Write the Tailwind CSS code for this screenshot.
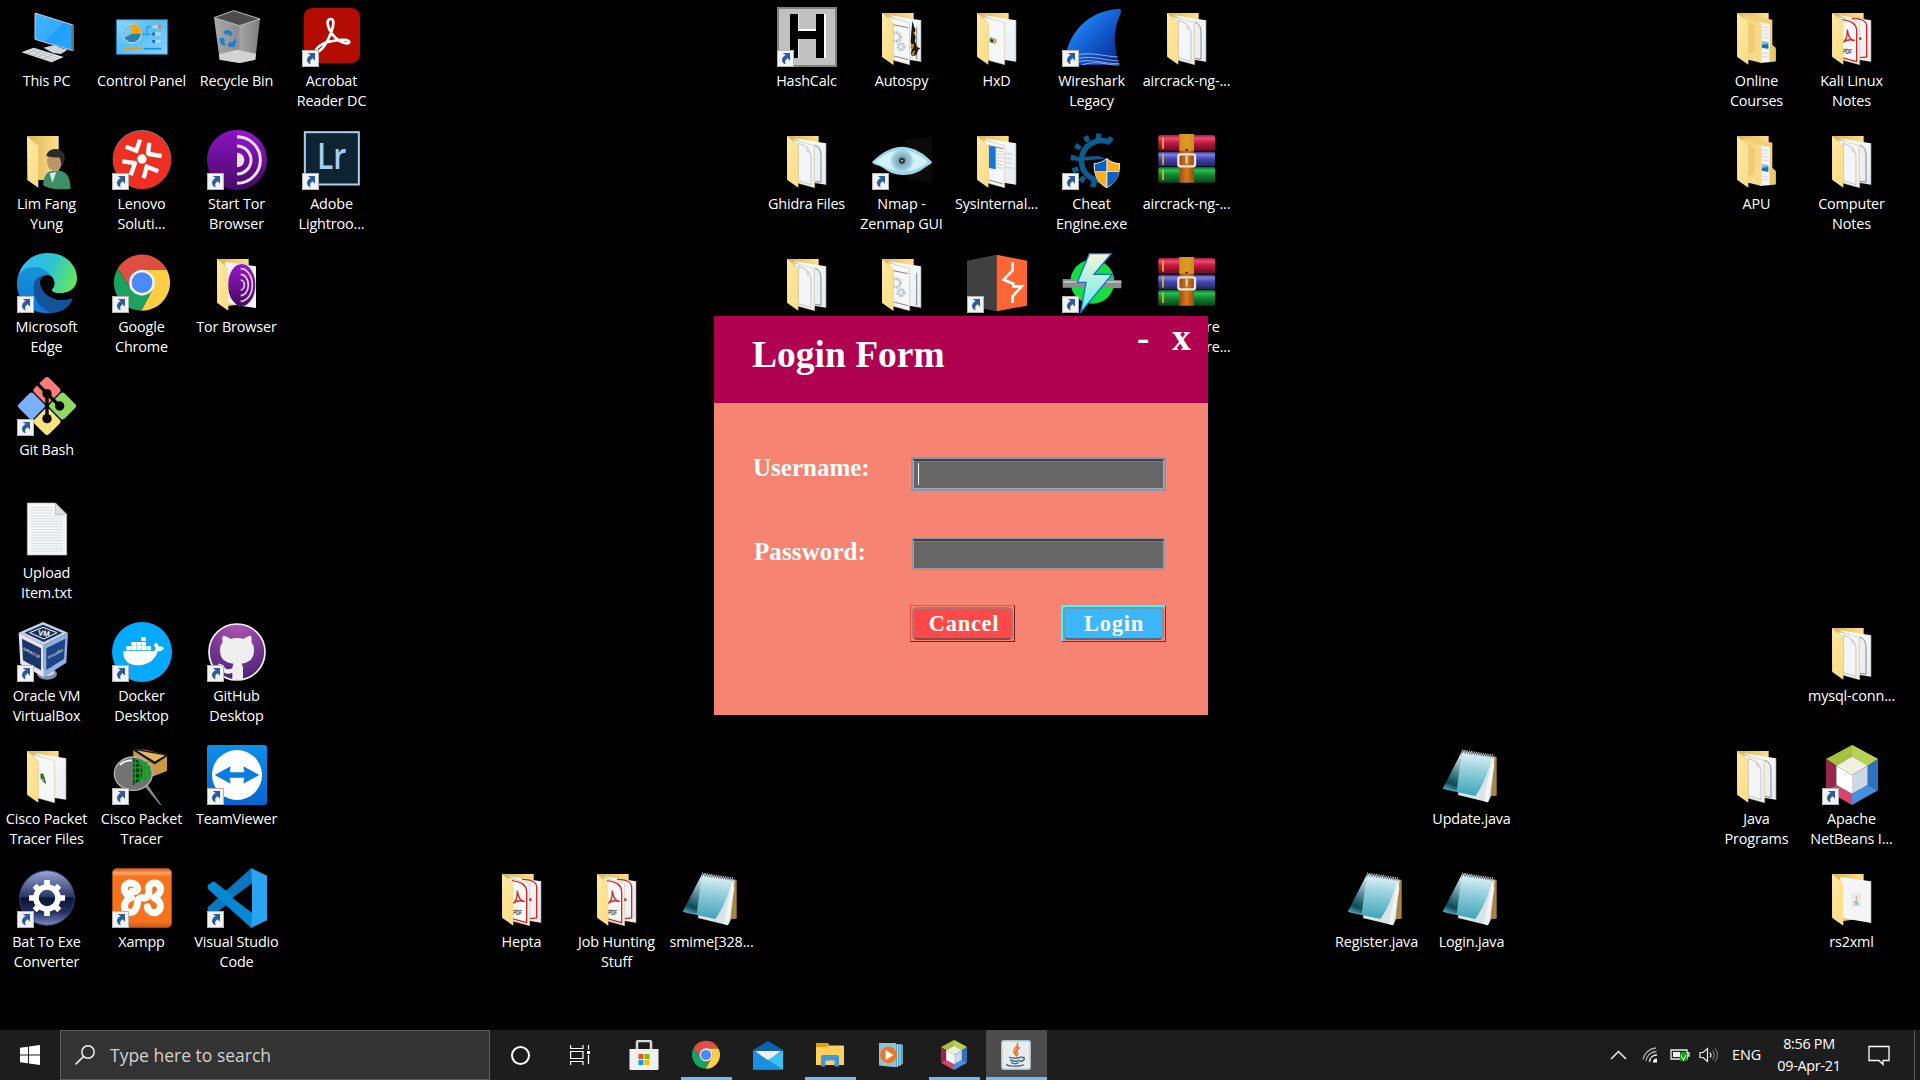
<!DOCTYPE html>
<html lang="en">
<head>
<meta charset="utf-8">
<title>Desktop</title>
<script src="https://cdn.jsdelivr.net/npm/@tailwindcss/browser@4"></script>
</head>
<body class="w-[1920px] h-[1080px] overflow-hidden bg-black font-['Open_Sans',sans-serif]">
<svg class="absolute size-0" aria-hidden="true">
<defs>
  <linearGradient id="gFlap" x1="0" y1="0" x2="1" y2="1"><stop offset="0" stop-color="#ffe9a6"/><stop offset="1" stop-color="#fcdc83"/></linearGradient>
  <linearGradient id="gBack" x1="0" y1="0" x2="1" y2="0"><stop offset="0" stop-color="#d9b357"/><stop offset="1" stop-color="#ffe08a"/></linearGradient>
  <linearGradient id="gPaper" x1="0" y1="0" x2="1" y2="1"><stop offset="0" stop-color="#ffffff"/><stop offset="1" stop-color="#e9ebee"/></linearGradient>
  <linearGradient id="gTor" x1="0" y1="0" x2="0" y2="1"><stop offset="0" stop-color="#9a17cf"/><stop offset="1" stop-color="#410a5c"/></linearGradient>
  <linearGradient id="gScreen" x1="0" y1="0" x2="1" y2="1"><stop offset="0" stop-color="#45b4ff"/><stop offset=".5" stop-color="#35aaff"/><stop offset=".52" stop-color="#1f9dff"/><stop offset="1" stop-color="#2ea8ff"/></linearGradient>
  <linearGradient id="gEdgeTop" x1="0" y1=".3" x2="1" y2=".6"><stop offset="0" stop-color="#35b9f5"/><stop offset=".5" stop-color="#2cc3d6"/><stop offset="1" stop-color="#62e858"/></linearGradient>
  <linearGradient id="gEdgeL" x1="0" y1="0" x2="0" y2="1"><stop offset="0" stop-color="#1795d8"/><stop offset="1" stop-color="#0a78d8"/></linearGradient>
  <linearGradient id="gTV" x1="0" y1="0" x2="0" y2="1"><stop offset="0" stop-color="#0e8ee9"/><stop offset="1" stop-color="#0665cf"/></linearGradient>
  <linearGradient id="gGear" x1="0" y1="0" x2="0" y2="1"><stop offset="0" stop-color="#9aa5d8"/><stop offset=".48" stop-color="#2a3563"/><stop offset=".5" stop-color="#0a1233"/><stop offset=".75" stop-color="#232e5e"/><stop offset="1" stop-color="#7c88c0"/></linearGradient>
  <linearGradient id="gXampp" x1="0" y1="0" x2="0" y2="1"><stop offset="0" stop-color="#c05a20"/><stop offset=".08" stop-color="#ffa468"/><stop offset=".14" stop-color="#f5731d"/><stop offset=".9" stop-color="#f5731d"/><stop offset="1" stop-color="#c9561a"/></linearGradient>
  <linearGradient id="gShark" x1="0" y1="0" x2="1" y2="1"><stop offset="0" stop-color="#5aa6ff"/><stop offset=".35" stop-color="#1a74e8"/><stop offset="1" stop-color="#02228a"/></linearGradient>
  <linearGradient id="gNote" x1=".5" y1="0" x2=".4" y2="1"><stop offset="0" stop-color="#e4f4f8"/><stop offset=".45" stop-color="#8fccd9"/><stop offset="1" stop-color="#3ba3b8"/></linearGradient>
  <linearGradient id="gNoteDark" x1=".5" y1="0" x2=".3" y2="1"><stop offset="0" stop-color="#d7e9ee"/><stop offset=".55" stop-color="#3c7886"/><stop offset=".8" stop-color="#0e4756"/><stop offset="1" stop-color="#57a9b9"/></linearGradient>
  <linearGradient id="gRed" x1="0" y1="0" x2="0" y2="1"><stop offset="0" stop-color="#a3183a"/><stop offset=".2" stop-color="#ee4a72"/><stop offset=".5" stop-color="#c01a3e"/><stop offset="1" stop-color="#6c0a22"/></linearGradient>
  <linearGradient id="gBlu" x1="0" y1="0" x2="0" y2="1"><stop offset="0" stop-color="#2d2f80"/><stop offset=".2" stop-color="#807ee2"/><stop offset=".5" stop-color="#4345ac"/><stop offset="1" stop-color="#22235f"/></linearGradient>
  <linearGradient id="gGrn" x1="0" y1="0" x2="0" y2="1"><stop offset="0" stop-color="#0e5f22"/><stop offset=".2" stop-color="#2ac050"/><stop offset=".5" stop-color="#148835"/><stop offset="1" stop-color="#074416"/></linearGradient>
  <linearGradient id="gBelt" x1="0" y1="0" x2="1" y2="0"><stop offset="0" stop-color="#9c4c0c"/><stop offset=".5" stop-color="#d9791c"/><stop offset="1" stop-color="#9c4c0c"/></linearGradient>
  <linearGradient id="gBolt" x1="0" y1="0" x2="0" y2="1"><stop offset="0" stop-color="#f2f5d8"/><stop offset="1" stop-color="#62ecf0"/></linearGradient>
  <linearGradient id="gBin" x1="0" y1="0" x2="1" y2="0"><stop offset="0" stop-color="#a9a9a9"/><stop offset=".54" stop-color="#8d8d8d"/><stop offset=".56" stop-color="#a4a4a4"/><stop offset="1" stop-color="#7e7e7e"/></linearGradient>
  <linearGradient id="gCP" x1="0" y1="0" x2="1" y2="1"><stop offset="0" stop-color="#8fd6ff"/><stop offset=".45" stop-color="#56bdf8"/><stop offset="1" stop-color="#8ad6ff"/></linearGradient>
  <radialGradient id="gCat" cx=".5" cy="0" r="1"><stop offset="0" stop-color="#b055b5"/><stop offset="1" stop-color="#4b2276"/></radialGradient>
  <radialGradient id="gEye"><stop offset="0" stop-color="#3c5560"/><stop offset=".3" stop-color="#7ea3b3"/><stop offset="1" stop-color="#a9dcec"/></radialGradient>

  <symbol id="shortcut" viewBox="0 0 180 180"><rect x="1.500" y="130.500" width="48" height="48" fill="#f3f3f3" stroke="#b5b5b5" stroke-width="3"/><path d="M17 138h22v23l-7-7c-8 5-9 10-6 18-13-4-16-20 0-28z" fill="#2b5c9e"/></symbol>

  <symbol id="fback" viewBox="0 0 180 180"><path d="M30 18H125V150L60 160 30 148Z" fill="url(#gBack)"/></symbol>
  <symbol id="fflap" viewBox="0 0 180 180"><path d="M30 19L62 46C64 50 64 54 64 60V173L31 150Z" fill="url(#gFlap)"/></symbol>
  <symbol id="fpapers" viewBox="0 0 180 180"><path d="M52 25L147 40V164L110 158V55Z" fill="url(#gPaper)"/><path d="M147 40V164" stroke="#9b9b9b" stroke-width="2"/><path d="M46 28L113 47V173L64 160V50Z" fill="#f6f7f8" stroke="#c7b98a" stroke-width="1.500"/></symbol>

  <symbol id="folder-docs" viewBox="0 0 180 180"><use href="#fback"/><use href="#fpapers"/><path d="M64 40C85 46 99 56 102 76V164L64 152Z" fill="#f4f5f7" stroke="#8f8f8f" stroke-width="1.500"/><path d="M84 46c10 5 15 12 17 24l-12-4z" fill="#dadada"/><path d="M114 46C126 50 130 58 132 72V157L114 154" fill="#eceef0" stroke="#555" stroke-width="2"/><path d="M110 50V170" stroke="#e8d9a8" stroke-width="2"/><use href="#fflap"/></symbol>
  <symbol id="folder-plain" viewBox="0 0 180 180"><use href="#fback"/><use href="#fpapers"/><use href="#fflap"/></symbol>
  <symbol id="folder-hxd" viewBox="0 0 180 180"><use href="#folder-plain"/><rect x="68" y="92" width="9" height="14" fill="#2f9a5a"/><circle cx="81" cy="102" r="8" fill="#d79a68"/><rect x="72" y="98" width="6" height="8" fill="#333"/></symbol>
  <symbol id="folder-cisco" viewBox="0 0 180 180"><use href="#folder-plain"/><path d="M70 87l8-2 6 16 3 16-7-5-9-12z" fill="#2f6d2a"/><path d="M74 98l8 6-3 5z" fill="#e0b84a"/></symbol>
  <symbol id="folder-gear" viewBox="0 0 180 180"><use href="#folder-plain"/><path d="M64 53L108 62M66 147L108 158M134 60V158" stroke="#4a4a4a" stroke-width="2"/><g fill="none" stroke="#b8c1c9" stroke-width="9" stroke-dasharray="5 2.500"><circle cx="72" cy="90" r="13"/><circle cx="87" cy="119" r="9"/></g><use href="#fflap"/></symbol>
  <symbol id="folder-autopsy" viewBox="0 0 180 180"><use href="#folder-gear"/><path d="M121 42l6 18 4 10-4 8 4 12-2 12 6 18 10 4-6 4-6 16-12 4-4-8 3-20-4-16 2-30z" fill="#1a1715"/><path d="M124 74l6 2-4 8zM117 110l10 2-4 14-8-2zM122 134l8-4-4 14-8 4z" fill="#c98427"/></symbol>
  <symbol id="folder-sys" viewBox="0 0 180 180"><use href="#fback"/><use href="#fpapers"/><path d="M64 46L108 56" stroke="#444" stroke-width="2"/><path d="M66 48L86 52V118L66 114Z" fill="#1177d8"/><path d="M88 62l20 3M88 72l20 3M88 82l20 3M88 92l20 3M88 102l20 3M88 112l20 3M116 70l20 3M116 84l20 3M116 98l20 3M116 112l20 3" stroke="#c3c7cc" stroke-width="4" stroke-dasharray="4 2"/><path d="M66 150L108 162" stroke="#555" stroke-width="2"/><use href="#fflap"/></symbol>
  <symbol id="folder-pdf" viewBox="0 0 180 180"><use href="#fback"/><use href="#fpapers"/><path d="M90 34C120 34 134 44 134 58V150L114 152" fill="none" stroke="#e3221b" stroke-width="4"/><path d="M60 38C88 42 104 50 104 72V164L60 152" fill="#f8f8f8" stroke="#e3221b" stroke-width="4"/><path d="M60 108C70 104 76 88 76 68C78 90 88 102 98 100C84 96 72 98 60 108" fill="none" stroke="#d7261e" stroke-width="4"/><circle cx="115" cy="95" r="4" fill="#d7261e"/><text x="62" y="140" font-family="Liberation Sans" font-weight="700" font-size="22" textLength="28" lengthAdjust="spacingAndGlyphs" fill="#4a4242" transform="rotate(4 62 140)">PDF</text><use href="#fflap"/></symbol>
  <symbol id="folder-nested" viewBox="0 0 180 180"><use href="#fback"/><path d="M48 22L136 38V115L146 125V163L100 168Z" fill="#f2d078"/><path d="M90 44L128 51V166L98 166Z" fill="#f2f4f7"/><path d="M106 60l18 2M106 70l18 2M106 80l18 2M106 90l18 2M106 138l18 2M106 148l18 2" stroke="#c8ccd2" stroke-width="2"/><path d="M104 102l20 3v20l-20-3z" fill="#7fbde6"/><path d="M104 114l20-4v15l-20-3z" fill="#1f6fa8"/><path d="M128 118L136 114L146 122V163L128 165Z" fill="#e9c56c"/><path d="M44 28L104 50V168L64 158V60Z" fill="#f7d987"/><path d="M62 40L84 60V130L64 140Z" fill="#eecb74"/><use href="#fflap"/></symbol>
  <symbol id="folder-tor" viewBox="0 0 180 180"><use href="#fback"/><path d="M55 27L147 40V165L100 158 60 150Z" fill="#f3f3f3"/><ellipse cx="104" cy="96" rx="41" ry="63" fill="url(#gTor)"/><g fill="none" stroke="#e5d3f2" stroke-width="5"><path d="M101 47a35 49 0 0 1 0 98"/><path d="M101 64a23 32 0 0 1 0 64"/><path d="M101 81a11 15 0 0 1 0 30"/></g><use href="#fflap"/></symbol>
  <symbol id="folder-jar" viewBox="0 0 180 180"><use href="#fback"/><path d="M55 27L147 40V165L62 150Z" fill="#f5f5f5"/><path d="M147 40V165" stroke="#aaa" stroke-width="2"/><rect x="92" y="80" width="22" height="34" fill="#eceff2" stroke="#c7ced6" stroke-width="1.500"/><path d="M104 84c-6 6 4 8-2 14" stroke="#e8893b" stroke-width="3" fill="none"/><path d="M96 102h12M98 108h12" stroke="#5d83a6" stroke-width="3"/><use href="#fflap"/></symbol>
  <symbol id="folder-user" viewBox="0 0 180 180"><path d="M30 18H125V150H64Z" fill="url(#gBack)"/><use href="#fflap"/><path d="M78 165C80 130 95 122 112 122C140 118 160 130 161 176C130 180 95 178 78 165Z" fill="#3d8f68"/><path d="M98 130l8 28 12-32z" fill="#d8e8f0"/><ellipse cx="113" cy="94" rx="23" ry="29" fill="#c0946a"/><path d="M88 78C92 50 140 50 143 80C144 95 138 106 133 110C133 95 130 88 126 82C112 84 98 80 88 78Z" fill="#2d2b2a"/></symbol>

  <symbol id="thispc" viewBox="0 0 180 180"><path d="M54 18L168 54V131L54 97Z" fill="url(#gScreen)" stroke="#c9cdd0" stroke-width="3"/><path d="M168 54V131L163 129V55Z" fill="#6d7478"/><path d="M79 122L112 114 130 122 152 128 132 141 108 138Z" fill="#cfd6da"/><path d="M13 136L50 122 140 150 104 166Z" fill="#e3e5e6"/><path d="M24 136l88 26M34 131l88 27M43 127l88 27M30 141l30-16M46 146l32-16M62 150l32-16M78 156l34-16" stroke="#9a9fa2" stroke-width="1.500"/></symbol>
  <symbol id="cpanel" viewBox="0 0 180 180"><rect x="13" y="38" width="154" height="104" fill="url(#gCP)" stroke="#1f6f99" stroke-width="3"/><circle cx="60" cy="80" r="28" fill="#2d7fae" stroke="#9fdcff" stroke-width="4"/><path d="M60 80V54a26 26 0 0 0-22 38z" fill="#7fc5ec"/><path d="M60 80V51a29 29 0 0 1 29 29z" fill="#f9a602"/><path d="M90 82h15V59h12M105 82h12" stroke="#2377b0" stroke-width="2" fill="none"/><g fill="#a5dffb" stroke="#6ab5df" stroke-width="2"><rect x="119" y="53" width="30" height="12" rx="6"/><rect x="119" y="75" width="30" height="12" rx="6"/><rect x="119" y="97" width="30" height="12" rx="6"/></g><circle cx="143" cy="59" r="5.500" fill="#f77a1e"/><circle cx="125" cy="81" r="5" fill="#216a9a"/><circle cx="125" cy="103" r="5" fill="#216a9a"/><path d="M35 125H88" stroke="#f99a06" stroke-width="5"/><path d="M95 125H148" stroke="#1b8be0" stroke-width="5"/></symbol>
  <symbol id="bin" viewBox="0 0 180 180"><path d="M21 32L80 11 159 36 145 158 98 168 38 158Z" fill="url(#gBin)"/><path d="M21 32L80 11 159 36 97 56Z" fill="#4c4c4c" stroke="#b9b9b9" stroke-width="3"/><path d="M36 142L90 128 147 140 145 158 98 168 38 158Z" fill="#d3d3d3"/><g fill="#1a7fd6"><path d="M47 74l14-6 10 3 6 10-8 8-6-10-6 6z"/><path d="M36 94l14-2 4 10-4 6 8 4-6 4-10-4z"/><path d="M62 113l8-10 2 4 8-4 2-12 6 12-6 18-14-2v5z"/></g></symbol>
  <symbol id="acrobat" viewBox="0 0 180 180"><rect x="5" y="3" width="169" height="165" rx="26" fill="#b30b00"/><path d="M85 72C73 50 75 36 86 36C97 36 96 52 89 72C78 104 60 131 47 134C34 134 46 110 92 102C120 97 143 97 142 106C138 115 104 106 85 72Z" fill="none" stroke="#fff" stroke-width="8"/></symbol>
  <symbol id="lenovo" viewBox="0 0 180 180"><circle cx="90" cy="88" r="88" fill="#777"/><circle cx="90" cy="90" r="87" fill="#ee3024"/><path d="M41 50L73 62L84 29M112 38L108 72L149 78M31 94L69 99L56 136M139 124L104 110L95 145" fill="none" stroke="#fff" stroke-width="13"/><circle cx="90" cy="87" r="19" fill="#ee3024"/><circle cx="90" cy="87" r="14" fill="#fff"/></symbol>
  <symbol id="tor" viewBox="0 0 180 180"><circle cx="90" cy="90" r="90" fill="url(#gTor)"/><path d="M90 0a90 90 0 0 0 0 180z" fill="#5a0a8f" opacity=".25"/><path d="M90 68a22 22 0 0 1 0 44z" fill="#eedff8"/><path d="M90 48a42 42 0 0 1 0 84M90 20a70 70 0 0 1 0 140" fill="none" stroke="#eedff8" stroke-width="9"/></symbol>
  <symbol id="lightroom" viewBox="0 0 180 180"><rect x="8.500" y="6.500" width="162" height="157" fill="#0d2432" stroke="#aacfee" stroke-width="6"/><text x="45" y="116" font-family="Open Sans" font-weight="600" font-size="106" textLength="88" lengthAdjust="spacingAndGlyphs" fill="#a9cdec">Lr</text></symbol>
  <symbol id="edge" viewBox="0 0 180 180"><path d="M0 92C0 40 40 25 90 42C118 55 115 85 108 95C70 105 60 140 110 178C50 190 0 150 0 92Z" fill="url(#gEdgeL)"/><path d="M3 72C14 26 50 0 92 0C150 0 180 40 180 76C180 106 155 121 131 121C112 121 103 116 104 110C112 104 113 97 112 88C106 62 78 42 52 42C28 42 10 54 3 72Z" fill="url(#gEdgeTop)"/><path d="M54 84C42 112 55 165 105 180C138 178 158 160 167 139C165 135 160 136 155 138C120 150 76 128 69 94C67 84 70 72 80 68C68 68 58 76 54 84Z" fill="#12539c"/><path d="M69 94C67 78 76 66 91 66C104 67 112 76 112 90C112 98 104 104 104 110C106 119 118 121 131 121C150 121 172 110 178 94L178 136L167 136C165 134 160 136 155 138C120 150 76 128 69 94Z" fill="#000"/></symbol>
  <symbol id="chrome" viewBox="0 0 180 180"><path d="M90 51H165A84 84 0 0 0 17 47L57 108A38 38 0 0 1 90 51Z" fill="#de4f42"/><path d="M17 47A84 84 0 0 0 88 173L123 108A38 38 0 0 1 57 108Z" fill="#1aa260"/><path d="M165 51A84 84 0 0 1 88 173L123 108A38 38 0 0 0 90 51Z" fill="#ffce45"/><circle cx="90" cy="89" r="39" fill="#f4f4f4"/><circle cx="90" cy="89" r="31" fill="#4b8bf5"/></symbol>
  <symbol id="gitbash" viewBox="0 0 180 180"><g transform="rotate(45 90 90)"><rect x="26" y="26" width="62" height="62" rx="9" fill="#ff7b7b"/><rect x="92" y="26" width="62" height="62" rx="9" fill="#8fd863"/><rect x="92" y="92" width="62" height="62" rx="9" fill="#ffe37d"/><rect x="26" y="92" width="62" height="62" rx="9" fill="#7bb0ff"/></g><path d="M58 20L90 53V128M90 53L128 90" fill="none" stroke="#000" stroke-width="10"/><g fill="#000"><circle cx="90" cy="53" r="14"/><circle cx="128" cy="90" r="14"/><circle cx="90" cy="128" r="14"/></g></symbol>
  <symbol id="txt" viewBox="0 0 180 180"><path d="M31 12H115L149 46V168H31Z" fill="#f7f7f7" stroke="#bbb" stroke-width="2"/><path d="M115 12L149 46H115Z" fill="#dedede" stroke="#a9a9a9" stroke-width="2"/><path d="M42 26H108M42 34H108M42 42H108M42 51H138M42 59H138M42 67H138M42 75H138M42 83H138M42 92H138M42 100H138M42 108H138M42 116H138M42 124H138M42 133H138M42 141H138M42 149H138M42 156H138" stroke="#d3d6d8" stroke-width="2.500"/></symbol>
  <symbol id="vbox" viewBox="0 0 180 180"><ellipse cx="90" cy="156" rx="30" ry="17" fill="#7e8fb5"/><ellipse cx="90" cy="152" rx="22" ry="10" fill="#c9d3e8"/><path d="M78 0L153 32 80 70 5 32Z" fill="#c4d4ea"/><path d="M78 8L136 32 80 60 22 32Z" fill="#17305c"/><path d="M78 16L120 32 80 51 38 32Z" fill="none" stroke="#fff" stroke-width="3"/><path d="M5 32L80 70V166L10 126Z" fill="#e6e2ee"/><path d="M15 50L72 79V145L18 115Z" fill="#1b3566"/><path d="M153 32L80 70V166L148 122Z" fill="#8fb0e0"/><path d="M145 50L88 79V144L141 111Z" fill="#1d4485"/><text x="64" y="41" font-family="Open Sans" font-weight="700" font-size="22" fill="#fff" transform="rotate(8 75 35)">VM</text><text transform="translate(19 84) skewY(27)" font-family="Open Sans" font-weight="700" font-size="13" fill="#c3cfe2" textLength="50" lengthAdjust="spacingAndGlyphs">ORACLE</text><text transform="translate(92 112) skewY(-28)" font-family="Open Sans" font-weight="700" font-size="13" fill="#c3cfe2" textLength="46" lengthAdjust="spacingAndGlyphs">VirtualBox</text></symbol>
  <symbol id="docker" viewBox="0 0 180 180"><circle cx="90" cy="90" r="90" fill="#04aaff"/><path d="M34 87H124C130 86 133 80 128 74C122 66 130 63 134 63C139 67 140 73 140 74C148 72 154 74 156 78C152 86 146 88 137 88C130 112 112 129 78 130C48 130 32 114 34 87Z" fill="#fff"/><g fill="#fff"><path d="M43 72h14v13H43zM58 72h14v13H58zM73 72h14v13H73zM88 72h14v13H88zM103 72h14v13h-14zM58 60h14v11H58zM73 60h14v11H73zM88 60h14v11H88zM88 45h14v12H88z"/></g></symbol>
  <symbol id="github" viewBox="0 0 180 180"><circle cx="90" cy="90" r="84" fill="url(#gCat)" stroke="#f5f5f5" stroke-width="5"/><path d="M76 172V152C66 157 52 158 46 144C42 134 38 132 33 126C44 122 50 132 54 138C60 144 70 142 76 138C77 132 78 128 80 125C55 122 39 112 39 84C39 74 42 67 47 61C45 54 46 47 48 41C56 41 64 46 70 51C82 47 98 47 110 51C116 46 124 41 132 41C134 47 135 54 133 61C138 67 141 74 141 84C141 112 125 122 103 125C107 129 108 134 108 140V172Z" fill="#efefef"/></symbol>
  <symbol id="ptracer" viewBox="0 0 180 180"><path d="M64 12L100 14 165 30V78L124 94 64 70Z" fill="#c99a43"/><path d="M64 12L128 54 165 30" fill="none" stroke="#151105" stroke-width="7"/><path d="M64 12L165 30 128 52Z" fill="#e1b865" stroke="#1e1607" stroke-width="4"/><path d="M95 120L144 180 148 180 105 116Z" fill="#8b8b8b"/><ellipse cx="64" cy="86" rx="57" ry="50" fill="#737373" stroke="#b3b3b3" stroke-width="4"/><path d="M64 38A54 47 0 0 1 64 120Z" fill="#062206"/><path d="M70 40V118M84 44V114M98 50V106M110 60V96M62 54H108M62 68H116M62 84H118M62 100H110" stroke="#00a815" stroke-width="5"/><path d="M24 60Q36 46 60 46" fill="none" stroke="#fff" stroke-width="5"/></symbol>
  <symbol id="teamviewer" viewBox="0 0 180 180"><rect width="180" height="180" rx="8" fill="url(#gTV)"/><circle cx="90" cy="90" r="75" fill="#fff"/><path d="M23 90L71 64L68 82H112L109 64L157 90L109 116L112 98H68L71 116Z" fill="#0a7be0"/></symbol>
  <symbol id="batexe" viewBox="0 0 180 180"><circle cx="90" cy="90" r="82" fill="url(#gGear)" stroke="#3a4474" stroke-width="3"/><circle cx="90" cy="90" r="33" fill="none" stroke="#fff" stroke-width="17"/><g stroke="#fff" stroke-width="17"><path d="M90 54V36M90 126V144M54 90H36M126 90H144M65 65L53 53M115 115L127 127M65 115L53 127M115 65L127 53"/></g></symbol>
  <symbol id="xampp" viewBox="0 0 180 180"><rect x="1" y="1" width="178" height="178" rx="14" fill="url(#gXampp)" stroke="#a9480f" stroke-width="2"/><path d="M58 89C40 80 32 64 40 52C50 40 72 44 76 58C80 66 72 72 60 70M58 89C40 94 30 118 44 130C62 140 74 126 76 106C78 90 84 88 96 90C110 92 112 74 110 60C112 44 134 40 142 52C152 66 142 80 126 89C146 98 150 116 140 128C128 140 108 132 106 116" fill="none" stroke="#fff" stroke-width="21" stroke-linecap="round" stroke-linejoin="round"/></symbol>
  <symbol id="vscode" viewBox="0 0 180 180"><path d="M132 0L180 23V157L132 180Z" fill="#27a5f2"/><path d="M133 0L2 118V128L16 138C20 140 24 138 26 136L135 52Z" fill="#0a76bb"/><path d="M133 180L2 62V52L16 42C20 40 24 42 26 44L135 128Z" fill="#0389d4"/><path d="M135 46V134L76 90Z" fill="#000"/></symbol>
  <symbol id="hashcalc" viewBox="0 0 180 180"><rect x="3" y="3" width="174" height="174" fill="#c1c1c1" stroke="#828282" stroke-width="6"/><path d="M39 21H65V66H121V21H147V153H121V95H65V153H39Z" fill="#fff"/><path d="M39 21H63V72H117V21H141V153H117V96H63V153H39Z" fill="#000"/></symbol>
  <symbol id="wireshark" viewBox="0 0 180 180"><path d="M10 150C24 66 90 8 175 5C179 12 176 18 174 24C150 76 156 130 172 174H40Z" fill="url(#gShark)"/><path d="M30 148C80 130 120 148 168 150M30 160C80 140 120 160 170 162M40 168C80 150 130 172 172 170M60 174C100 158 140 176 172 174" fill="none" stroke="#cfe2ff" stroke-width="2"/></symbol>
  <symbol id="nmap" viewBox="0 0 180 180"><path d="M100 30L180 20V158L110 150Z" fill="#0a0a0a"/><path d="M0 96C30 66 60 50 92 50C124 52 158 70 180 96C180 102 170 104 160 112C140 128 120 135 96 135C70 136 50 126 34 114C20 104 4 106 0 96Z" fill="#9fd6e6"/><path d="M8 96C40 70 60 60 90 60C120 60 146 76 168 96C140 118 120 124 90 124C60 124 40 112 8 96Z" fill="#d4f0f8"/><circle cx="90" cy="92" r="33" fill="url(#gEye)"/><circle cx="90" cy="92" r="9" fill="#28343a"/><circle cx="90" cy="92" r="3" fill="#b6c4c9"/></symbol>
  <symbol id="cheat" viewBox="0 0 180 180"><g fill="none" stroke="#0b5d8f"><path d="M144 38A60 60 0 1 0 140 148" stroke-width="16"/><path d="M150 34A72 72 0 1 0 148 150" stroke-width="18" stroke-dasharray="15 21"/></g><path d="M40 82L110 78 130 86 44 94Z" fill="#0b5d8f"/><path d="M95 100C110 98 122 94 134 84C146 94 158 98 174 100C176 140 160 160 134 175C108 160 94 140 95 100Z" fill="#eee"/><path d="M98 103C110 101 122 97 133 88V124H99ZM136 126H171C168 146 158 160 136 171Z" fill="#0b62c4"/><path d="M136 88C148 98 158 101 171 103L171 124H136ZM99 126H133V171C112 160 102 146 99 126Z" fill="#ffb022"/></symbol>
  <symbol id="winrar" viewBox="0 0 180 180"><rect x="4" y="15" width="170" height="47" rx="5" fill="url(#gRed)"/><rect x="4" y="65" width="170" height="44" rx="5" fill="url(#gBlu)"/><rect x="4" y="111" width="170" height="47" rx="5" fill="url(#gGrn)"/><rect x="15.500" y="22" width="5" height="34" fill="#e5b52a"/><rect x="15.500" y="70" width="5" height="34" fill="#e5b52a"/><rect x="15.500" y="118" width="5" height="32" fill="#e5b52a"/><rect x="67" y="12" width="44" height="146" fill="url(#gBelt)"/><rect x="67" y="12" width="44" height="50" fill="#e0a526" opacity=".75"/><rect x="64" y="73" width="50" height="36" rx="6" fill="none" stroke="#e6e6e6" stroke-width="7"/><path d="M89 78V100" stroke="#d5d5d5" stroke-width="6"/><circle cx="89" cy="60" r="4" fill="#4b2506"/></symbol>
  <symbol id="burp" viewBox="0 0 180 180"><path d="M0 23L89 5V175L0 158Z" fill="#404040"/><path d="M89 5L180 23V158L89 175Z" fill="#ff6633"/><path d="M137 28V52L110 80L139 92V100H164L137 130V150" fill="none" stroke="#fff" stroke-width="8"/></symbol>
  <symbol id="zap" viewBox="0 0 180 180"><circle cx="91" cy="86" r="66" fill="#12e03c"/><path d="M2 78L90 80 178 82V106L90 104 2 104Z" fill="#8e8e8e"/><path d="M4 84H178V89H4Z" fill="#c2c2c2"/><path d="M82 2H148L96 64H150L56 178L72 88H46Z" fill="url(#gBolt)" stroke="#176dd8" stroke-width="4"/></symbol>
  <symbol id="notepad" viewBox="0 0 180 180"><path d="M156 34L164 36V152L146 154Z" fill="#a8843e"/><path d="M64 18L158 36L146 156L138 172L48 150Z" fill="#d9e3e8"/><path d="M150 40L126 168L138 172L157 60Z" fill="#f2f5f6"/><path d="M60 18L150 34C140 80 122 124 100 153L6 133L40 130Z" fill="url(#gNote)"/><path d="M60 18L44 138L2 131Z" fill="url(#gNoteDark)"/><path d="M60 20L154 34" stroke="#747d80" stroke-width="9" stroke-dasharray="4 3"/><path d="M60 15L154 30" stroke="#e3e6e7" stroke-width="3" stroke-dasharray="3 4"/></symbol>
  <symbol id="netbeans" viewBox="0 0 180 180"><path d="M90 0L168 42 137 62 90 34 43 62 12 42Z" fill="#a6c13d"/><path d="M90 0L168 42 137 62 90 34Z" fill="#b6d153"/><path d="M12 42L43 62V120L12 136Z" fill="#93284c"/><path d="M12 136L43 120 90 146V180Z" fill="#d9446a"/><path d="M168 42L137 62V120L168 136Z" fill="#2f70bf"/><path d="M168 136L137 120 90 146V180Z" fill="#4590e0"/><path d="M90 34L137 62 90 90 43 62Z" fill="#eff2df"/><path d="M43 62L90 90V146L43 120Z" fill="#fff"/><path d="M137 62L90 90V146L137 120Z" fill="#cdd8e3"/></symbol>
</defs>
</svg>

<main id="desktop" class="grid h-[1030px] grid-cols-[repeat(20,94px)] grid-rows-[repeat(8,123px)] gap-x-px"></main>

<section class="absolute left-[714px] top-[316px] flex h-[399px] w-[494px] flex-col bg-[#f78472] font-['Liberation_Serif',serif] font-bold text-white">
  <header class="flex h-[87px] bg-[#b0004f] text-[37.5px] leading-[42px]">
    <h1 class="w-[385px] pl-[38px] pt-[18px]">Login Form</h1>
    <div class="w-[36px] pl-[38px] pt-px">-</div>
    <div class="pl-[35px] pt-px">x</div>
  </header>
  <form class="grid grid-cols-[158px_256px] grid-rows-[81px_67px_38px] pl-[39px] pt-[54px] text-[25px] leading-7">
    <label class="-mt-[3px]">Username:</label>
    <div class="h-[34px] w-[255px] border-2 border-[#8298b8]">
      <div class="h-full border border-t-2 border-[#a9a9a9] border-t-[#424242] bg-[#666] pl-1 pt-[2px] shadow-[inset_0_1px_#787878]"><div class="h-[22px] w-px bg-white"></div></div>
    </div>
    <label class="pl-px tracking-[0.100px]">Password:</label>
    <div class="ml-px h-8 w-[253px] border border-[#999093]">
      <div class="h-full border border-t-2 border-[#9c9c9c] border-t-[#424242] bg-[#666] shadow-[inset_0_1px_#787878]"></div>
    </div>
    <div class="col-start-2 -ml-px flex w-[256px] justify-between text-[22.500px] leading-[29px] tracking-[0.700px]">
      <div class="h-[37px] w-[105px] border border-[#ff4a4a] border-b-[#7a1a1a] border-r-[#7a1a1a] p-px"><div class="h-full rounded-[5px] border-2 border-[#a77] border-b-[#8b4a4a] bg-[#ff4848] pl-[3px] text-center">Cancel</div></div>
      <div class="h-[37px] w-[105px] border border-[#3ff] border-b-[#1c4f7a] border-r-[#1c4f7a] p-px shadow-[inset_1px_1px_#3ff]"><div class="h-full rounded-[5px] border-2 border-[#7298ac] border-b-[#3f7190] bg-[#3bb6ff] pl-px text-center">Login</div></div>
    </div>
  </form>
</section>

<footer class="flex h-[50px] bg-[#1d1d1d] text-white">
  <div class="flex w-[60px] items-center justify-center"><svg class="size-5" viewBox="0 0 20 20" fill="#fff"><path d="M0 2.800L8 1.700V9.500H0ZM9 1.500L20 0V9.500H9ZM0 10.500H8V18.300L0 17.200ZM9 10.500H20V20L9 18.500Z"/></svg></div>
  <div class="flex w-[430px] items-center border border-[#5c5c5c] bg-[#333] pl-[14px]">
    <svg class="h-5 w-5" viewBox="0 0 20 20" fill="none" stroke="#f0f0f0" stroke-width="1.500"><circle cx="13" cy="7" r="6.200"/><path d="M8.600 11.400L.6 19.400"/></svg>
    <span class="pl-[15px] text-[17.500px] text-[#d2d2d2]">Type here to search</span>
  </div>
  <div class="flex w-[60px] items-center justify-center"><div class="size-[19px] rounded-full border-[2.500px] border-white"></div></div>
  <div class="flex w-[60px] items-center justify-center"><svg class="size-5" viewBox="0 0 20 20" fill="none" stroke="#fff" stroke-width="1.200"><path d="M.6 0V3.500H13V0M.6 20V16.500H13V20M.6 6.500H13V13.500H.6ZM18.500 0V4.500M18.500 10V19"/><path d="M17 6h3v3h-3z" fill="#fff" stroke="none"/></svg></div>
  <div class="flex w-[67px] items-center justify-center"><svg class="size-[30px]" viewBox="0 0 30 30"><path d="M8 10V2.500Q8 1 9.500 1H20.500Q22 1 22 2.500V10" fill="none" stroke="#d9d9d9" stroke-width="2.500"/><path d="M.5 9H29.500V29Q29.500 30 28 30H2Q.5 30 .5 29Z" fill="#f1f1f1"/><path fill="#f25022" d="M9.500 14H14.500V19H9.500z"/><path fill="#7fba00" d="M15.500 14H20.500V19H15.500z"/><path fill="#00a4ef" d="M9.500 20H14.500V25H9.500z"/><path fill="#ffb900" d="M15.500 20H20.500V25H15.500z"/></svg></div>
  <div class="flex w-[58px] justify-center"><div class="flex h-[50px] w-[51px] items-center justify-center border-b-[3px] border-[#76b9ed] pt-[3px]"><svg class="size-[30px]"><use href="#chrome"/></svg></div></div>
  <div class="flex w-[66px] items-center justify-center"><svg class="size-[30px]" viewBox="0 0 30 30"><path d="M0 10L15 1 30 10V20H0Z" fill="#0d62b3"/><path d="M2 11H28L15 21Z" fill="#efefef"/><path d="M30 10.500L0 29.500H30Z" fill="#37c2f2"/><path d="M0 10.500L15 20 30 29.500H0Z" fill="#1b90e2"/></svg></div>
  <div class="flex w-[58px] justify-center"><div class="flex h-[50px] w-[51px] items-center justify-center border-b-[3px] border-[#76b9ed] pt-[2px]"><svg class="h-6 w-7" viewBox="0 0 28 24"><path d="M0 1Q0 0 1 0H11L13 2.500H27Q28 2.500 28 3.500V22H0Z" fill="#ffd15c"/><path d="M0 4V1Q0 0 1 0H12L13.500 2 11 4Z" fill="#e3a008"/><path d="M5 23.500V14Q5 12 7 12H21Q23 12 23 14V23.500H18.500V17.500H9.500V23.500Z" fill="#3f97dc"/></svg></div></div>
  <div class="flex w-[64px] items-center justify-center"><svg class="size-[26px]" viewBox="0 0 26 26"><path d="M5 1L25 2.500V22L18 25 5 24Z" fill="#5da6c2"/><path d="M22 2V24M19.500 2V25" stroke="#aadcec"/><path d="M1 1H18V25L1 23.500Z" fill="#8fc2d6"/><circle cx="10.500" cy="13" r="8.300" fill="#f27321"/><path d="M7.500 8L15.500 13 7.500 18Z" fill="#fff"/></svg></div>
  <div class="flex w-[62px] justify-center"><div class="flex h-[50px] w-[51px] items-center justify-center border-b-[3px] border-[#76b9ed] pt-[3px]"><svg class="size-[30px]"><use href="#netbeans"/></svg></div></div>
  <div class="ml-px flex w-[61px] items-center justify-center border-b-[3px] border-[#76b9ed] bg-[#4b4b4b] pr-px pt-[3px]"><svg class="size-[30px]" viewBox="0 0 30 30"><rect x=".7" y=".7" width="28.600" height="28.600" rx="2" fill="#ececec" stroke="#aebfcb" stroke-width="1.400"/><path d="M16.500 3C18 7 11 8 13 12.500L15 15.500C15 12 13 11.500 16.500 8.500ZM19 7.500C14.500 9.500 15.500 12 17 13.500L16 16" fill="none" stroke="#e87025" stroke-width="1.400"/><path d="M8 17C10 18.500 17 18.500 20 17M9 20C12 21.500 17 21.500 19 20M20 17.500C25 16 24 21 19 21.500M10 22.500C12 24 16 24 18 22.500M6 24C4 26.500 20 27 23 24.500" fill="none" stroke="#47708e" stroke-width="1.500"/></svg></div>
  <div class="ml-auto flex items-center">
    <svg class="w-[17px]" viewBox="0 0 17 10" fill="none" stroke="#eee" stroke-width="1.500"><path d="M1 9L8.500 1.500 16 9"/></svg>
    <svg class="ml-[15px] size-4" viewBox="0 0 16 16" fill="none" stroke="#aaa" stroke-width="1.300"><path d="M1 12.500A14 14 0 0 1 14 1M4 14A10.500 10.500 0 0 1 14.500 4.500"/><path d="M7.500 15A7 7 0 0 1 15 8" stroke="#eee"/><path d="M11 15.500A4 4 0 0 1 15 11.500V15.500Z" fill="#fff" stroke="none"/></svg>
    <svg class="ml-3 h-[18px] w-5" viewBox="0 0 20 18" fill="none"><path d="M1 4H17V13H1ZM17 7H19V10H17" stroke="#eee" stroke-width="1.300"/><path d="M3 6H10V11H3Z" fill="#eee"/><rect x="10" y="6" width="7" height="9" rx="1.500" fill="#18a018"/><path d="M11.500 9V10.500Q11.500 12.500 13.500 12.500T15.500 10.500V9M13.500 12.500V15" stroke="#fff"/></svg>
    <svg class="ml-[9px] h-4 w-5" viewBox="0 0 20 16" fill="none" stroke="#eee" stroke-width="1.200"><path d="M1 5.500H4L8.500 1.500V14.500L4 10.500H1ZM11 5.500Q13 8 11 10.500"/><path d="M13.500 3.500Q17 8 13.500 12.500M16 1.500Q21 8 16 14.500" stroke="#777"/></svg>
    <span class="ml-[13px] w-[31px] text-[14.400px]">ENG</span>
    <div class="ml-[9px] w-[74px] text-center text-[14.400px] leading-[22.500px] tracking-[-0.300px]"><div>8:56 PM</div><div>09-Apr-21</div></div>
    <svg class="ml-[22px] size-[22px]" viewBox="0 0 22 22" fill="none" stroke="#fff" stroke-width="1.300"><path d="M1 2.500H21V16.500H15V20.500L11 16.500H1Z"/></svg>
    <div class="ml-6 mr-[5px] h-[50px] w-px bg-[#5a5a5a]"></div>
  </div>
</footer>

<script>
// column, row, icon id, shortcut arrow, label lines
const items = [
  [0,0,'thispc',0,'This PC'],[1,0,'cpanel',0,'Control Panel'],[2,0,'bin',0,'Recycle Bin'],[3,0,'acrobat',1,'Acrobat|Reader DC'],
  [0,1,'folder-user',0,'Lim Fang|Yung'],[1,1,'lenovo',1,'Lenovo|Soluti...'],[2,1,'tor',1,'Start Tor|Browser'],[3,1,'lightroom',1,'Adobe|Lightroo...'],
  [0,2,'edge',1,'Microsoft|Edge'],[1,2,'chrome',1,'Google|Chrome'],[2,2,'folder-tor',0,'Tor Browser'],
  [0,3,'gitbash',1,'Git Bash'],[0,4,'txt',0,'Upload|Item.txt'],
  [0,5,'vbox',1,'Oracle VM|VirtualBox'],[1,5,'docker',1,'Docker|Desktop'],[2,5,'github',1,'GitHub|Desktop'],
  [0,6,'folder-cisco',0,'Cisco Packet|Tracer Files'],[1,6,'ptracer',1,'Cisco Packet|Tracer'],[2,6,'teamviewer',1,'TeamViewer'],
  [0,7,'batexe',1,'Bat To Exe|Converter'],[1,7,'xampp',1,'Xampp'],[2,7,'vscode',1,'Visual Studio|Code'],
  [5,7,'folder-pdf',0,'Hepta'],[6,7,'folder-pdf',0,'Job Hunting|Stuff'],[7,7,'notepad',0,'smime[328...'],
  [8,0,'hashcalc',1,'HashCalc'],[9,0,'folder-autopsy',0,'Autospy'],[10,0,'folder-hxd',0,'HxD'],[11,0,'wireshark',1,'Wireshark|Legacy'],[12,0,'folder-docs',0,'aircrack-ng-...'],
  [8,1,'folder-docs',0,'Ghidra Files'],[9,1,'nmap',1,'Nmap -|Zenmap GUI'],[10,1,'folder-sys',0,'Sysinternal...'],[11,1,'cheat',1,'Cheat|Engine.exe'],[12,1,'winrar',0,'aircrack-ng-...'],
  [8,2,'folder-docs',0,''],[9,2,'folder-gear',0,''],[10,2,'burp',1,''],[11,2,'zap',1,''],[12,2,'winrar',0,'re|re...'],
  [18,0,'folder-nested',0,'Online|Courses'],[19,0,'folder-pdf',0,'Kali Linux|Notes'],
  [18,1,'folder-nested',0,'APU'],[19,1,'folder-docs',0,'Computer|Notes'],
  [19,5,'folder-docs',0,'mysql-conn...'],[15,6,'notepad',0,'Update.java'],[18,6,'folder-docs',0,'Java|Programs'],[19,6,'netbeans',1,'Apache|NetBeans I...'],
  [14,7,'notepad',0,'Register.java'],[15,7,'notepad',0,'Login.java'],[19,7,'folder-jar',0,'rs2xml'],
];
document.getElementById('desktop').innerHTML = items.map(([c, r, icon, link, label]) => {
  const align = label === 're|re...' ? 'self-start pl-[66px] text-left' : 'pr-px text-center';
  return `<div class="flex flex-col items-center pt-[7px]" style="grid-column:${c + 1};grid-row:${r + 1}">
    <svg class="size-[60px] shrink-0" viewBox="0 0 180 180"><use href="#${icon}"/>${link ? '<use href="#shortcut"/>' : ''}</svg>
    <div class="mt-1 whitespace-nowrap text-[14.400px] leading-5 tracking-[-0.150px] text-white ${align}">${label.split('|').map(t => `<div>${t}</div>`).join('')}</div>
  </div>`;
}).join('');
</script>
</body>
</html>
